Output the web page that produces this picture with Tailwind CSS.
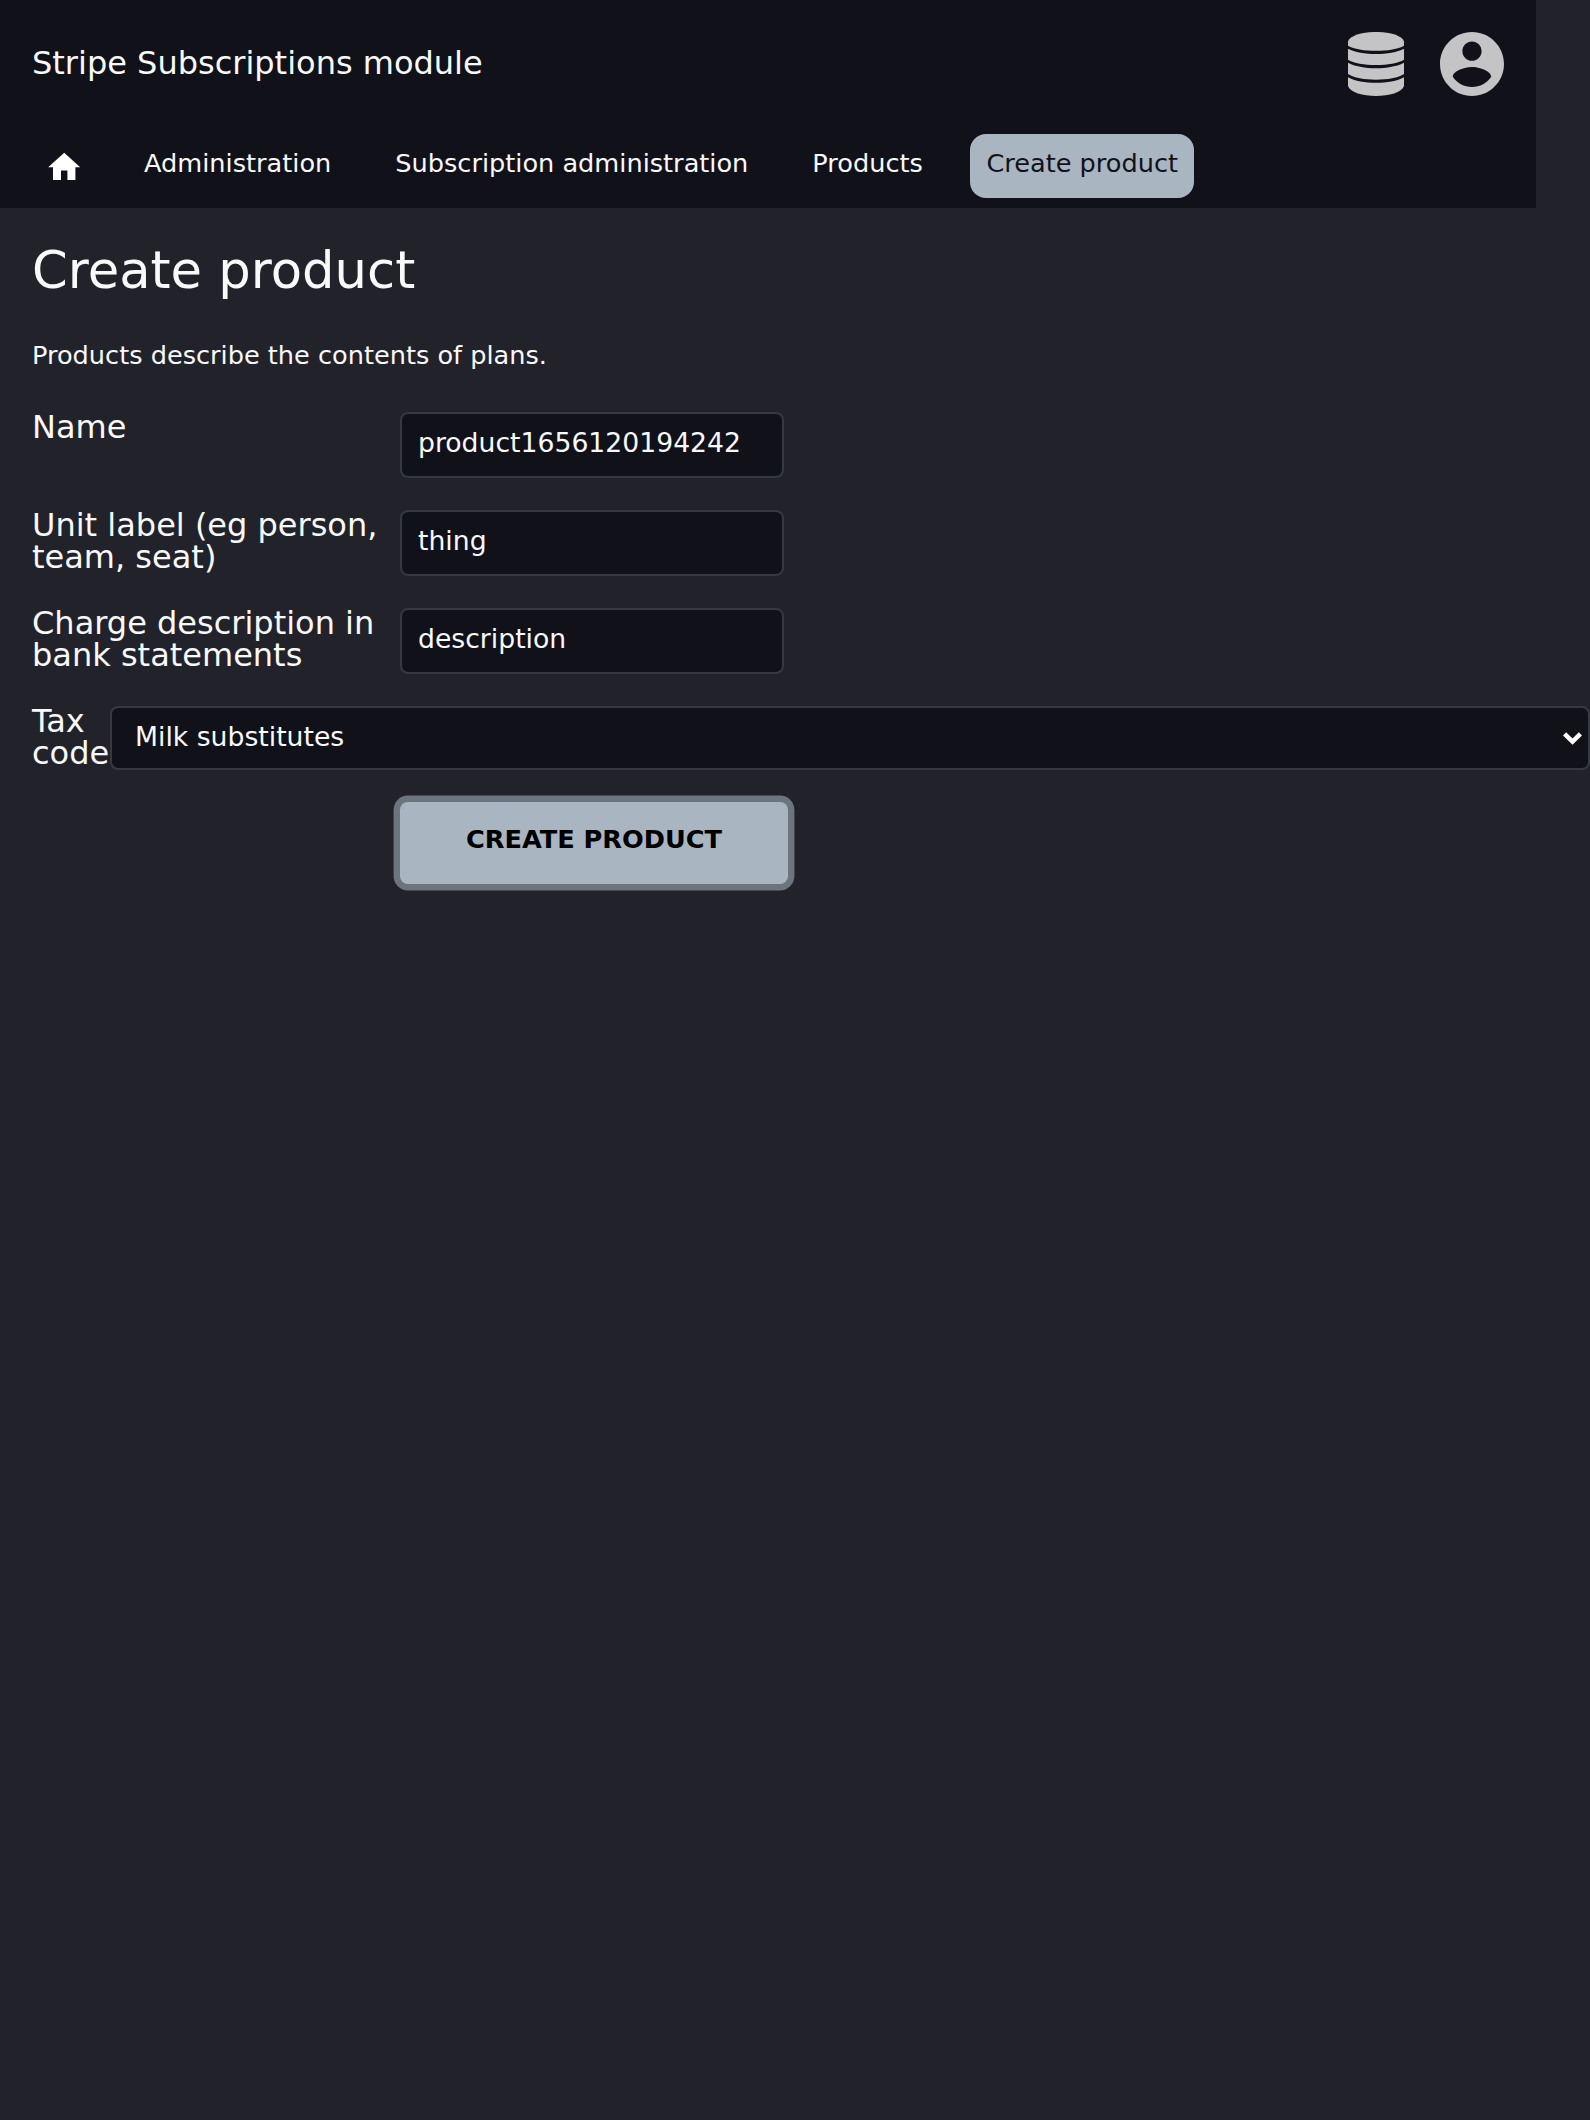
<!DOCTYPE html>
<html lang="en">
<head>
<meta charset="utf-8">
<title>Create product</title>
<script src="https://cdn.jsdelivr.net/npm/@tailwindcss/browser@4"></script>
</head>
<body class="min-h-[2120px] overflow-hidden bg-[#22222b] font-['DejaVu_Sans',sans-serif] text-[#f8f9fa]">
<header class="h-[208px] w-[1536px] bg-[#11111a]">
  <div class="flex h-32 items-center justify-between px-8">
    <div class="pb-0.5 text-[32px] leading-[124px]">Stripe Subscriptions module</div>
    <div class="flex gap-8">
      <svg class="h-16 w-16" viewBox="0 0 64 64" fill="#c4c4c6">
        <path d="M4 9.5C8-3.2 56-3.2 60 9.5V13.7C49 20.5 15 20.5 4 13.7Z"/>
        <path d="M4 16.7C17 23.8 47 23.8 60 16.7V27.8C49 34.8 15 34.8 4 27.8Z"/>
        <path d="M4 30.8C17 38.1 47 38.1 60 30.8V42C49 49.6 15 49.6 4 42Z"/>
        <path d="M4 45.2C17 52.6 47 52.6 60 45.2V54C56 67.3 8 67.3 4 54Z"/>
      </svg>
      <svg class="h-16 w-16" viewBox="2 2 20 20" fill="#c4c4c6"><path d="M12 2C6.48 2 2 6.48 2 12s4.48 10 10 10 10-4.48 10-10S17.52 2 12 2zm0 3c1.66 0 3 1.34 3 3s-1.34 3-3 3-3-1.34-3-3 1.34-3 3-3zm0 14.2c-2.5 0-4.71-1.28-6-3.22.03-1.99 4-3.08 6-3.08 1.99 0 5.97 1.09 6 3.08-1.29 1.94-3.5 3.22-6 3.22z"/></svg>
    </div>
  </div>
  <nav class="flex gap-8 px-8 pt-1.5 text-[25.6px] leading-[58px]">
    <a class="flex h-16 w-16 justify-center pt-[13.5px]"><svg class="h-[38.4px] w-[38.4px]" viewBox="0 0 24 24" fill="#fff"><path d="M10 20v-6h4v6h5v-8h3L12 3 2 12h3v8z"/></svg></a>
    <a class="h-16 px-4">Administration</a>
    <a class="h-16 px-4">Subscription administration</a>
    <a class="h-16 px-4">Products</a>
    <a class="-ml-px h-16 rounded-2xl bg-[#a9b5c0] pr-[15.5px] pl-[16.5px] text-[#11111a]">Create product</a>
  </nav>
</header>
<main class="pt-[30px] pl-8">
  <h1 class="text-[51.2px] leading-16">Create product</h1>
  <p class="mt-[37px] text-[25.6px] leading-8">Products describe the contents of plans.</p>
  <form class="mt-[41px]">
    <div class="flex h-[98px] text-[32px] leading-8">
      <label class="-mt-px w-[368px]">Name</label>
      <div class="h-[66px] w-96 rounded-lg border-2 border-[#343a40] bg-[#11111a] px-4 text-[26.667px] leading-[58px]">product1656120194242</div>
    </div>
    <div class="flex h-[98px] text-[32px] leading-8">
      <label class="-mt-px w-[368px]">Unit label (eg person,<br>team, seat)</label>
      <div class="h-[66px] w-96 rounded-lg border-2 border-[#343a40] bg-[#11111a] px-4 text-[26.667px] leading-[58px]">thing</div>
    </div>
    <div class="flex h-[98px] text-[32px] leading-8">
      <label class="-mt-px w-[368px]">Charge description in<br>bank statements</label>
      <div class="h-[66px] w-96 rounded-lg border-2 border-[#343a40] bg-[#11111a] px-4 text-[26.667px] leading-[58px]">description</div>
    </div>
    <div class="flex h-24 text-[32px] leading-8">
      <label class="-mt-px w-[78px] shrink-0">Tax<br>code</label>
      <div class="flex h-16 flex-1 justify-between rounded-lg border-2 border-[#343a40] bg-[#11111a] pr-[6px] pl-[23px] text-[26.667px] leading-[58px]">Milk substitutes
        <svg class="mt-[24px] h-[13px] w-[19px]" viewBox="0 0 19 13" fill="none" stroke="#fff" stroke-width="4.5"><path d="M1.6 1.8 9.5 9.6 17.4 1.8"/></svg>
      </div>
    </div>
    <button type="button" class="ml-[368px] block h-[82px] w-[388px] rounded-lg bg-[#a9b5c0] pb-[7px] text-[25.6px] font-bold text-black shadow-[0_0_0_6.4px_#6c757d]">CREATE PRODUCT</button>
  </form>
</main>
</body>
</html>
